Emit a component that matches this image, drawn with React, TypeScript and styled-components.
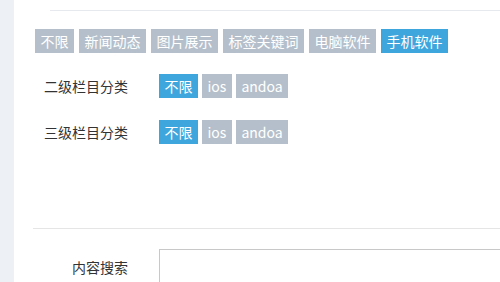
import React from 'react';
import styled, { createGlobalStyle } from 'styled-components';

const TOP_TAGS = ['不限', '新闻动态', '图片展示', '标签关键词', '电脑软件', '手机软件'];
const SUB_TAGS = ['不限', 'ios', 'andoa'];

const FILTERS = [
  { label: '二级栏目分类', active: '不限' },
  { label: '三级栏目分类', active: '不限' },
];

const GlobalStyle = createGlobalStyle`
  html, body {
    margin: 0;
    padding: 0;
    background: #fff;
  }
  body {
    font-family: "Noto Sans CJK SC", "Noto Sans", sans-serif;
    font-size: 14px;
    color: #333;
  }
`;

type ITagProps = {
  $active: boolean;
};

export default function App() {
  return (
    <Page>
      <GlobalStyle />
      <Sidebar />
      <Main>
        <TopRule />
        <TagBar>
          {TOP_TAGS.map(tag => (
            <Tag key={tag} $active={tag === '手机软件'}>{tag}</Tag>
          ))}
        </TagBar>
        {FILTERS.map(({ label, active }) => (
          <FilterRow key={label}>
            <FieldLabel>{label}</FieldLabel>
            <TagList>
              {SUB_TAGS.map(tag => (
                <Tag key={tag} $active={tag === active}>{tag}</Tag>
              ))}
            </TagList>
          </FilterRow>
        ))}
        <BottomRule />
        <SearchRow>
          <FieldLabel>内容搜索</FieldLabel>
          <SearchInput />
        </SearchRow>
      </Main>
    </Page>
  );
}

const Page = styled.div`
  display: flex;
  width: 500px;
  height: 282px;
  overflow: hidden;
`;

const Sidebar = styled.div`
  flex: 0 0 14px;
  background-color: #edf1f6;
`;

const Main = styled.div`
  flex: 1;
  min-width: 0;
  display: flex;
  flex-direction: column;
`;

const TopRule = styled.div`
  margin: 10px 0 0 36px;
  border-top: 1px solid #e6e9ed;
`;

const TagBar = styled.div`
  display: flex;
  gap: 5px;
  margin-top: 18px;
  padding-left: 21px;
`;

const Tag = styled.span`
  display: inline-block;
  height: 24px;
  line-height: 24px;
  padding: 0 5.5px;
  font-size: 14px;
  color: #fff;
  white-space: nowrap;
  background-color: ${({ $active }: ITagProps) => ($active ? '#3ea6dd' : '#b5bfcb')};
`;

const FilterRow = styled.div`
  display: flex;
  align-items: center;
  margin-top: 21px;

  & + & {
    margin-top: 22px;
  }
`;

const FieldLabel = styled.div`
  flex: 0 0 114px;
  text-align: right;
  font-size: 14px;
  color: #333;
  line-height: 24px;
`;

const TagList = styled.div`
  display: flex;
  gap: 4px;
  margin-left: 31px;
`;

const BottomRule = styled.div`
  margin: 84px 0 0 19px;
  border-top: 1px solid #e5e5e5;
`;

const SearchRow = styled.div`
  display: flex;
  align-items: flex-start;
  margin-top: 20px;

  ${FieldLabel} {
    padding-top: 6px;
  }
`;

const SearchInput = styled.input`
  flex: 0 0 380px;
  height: 36px;
  margin-left: 31px;
  padding: 0;
  border: 1px solid #c8c8c8;
  outline: none;
  box-sizing: border-box;
`;
